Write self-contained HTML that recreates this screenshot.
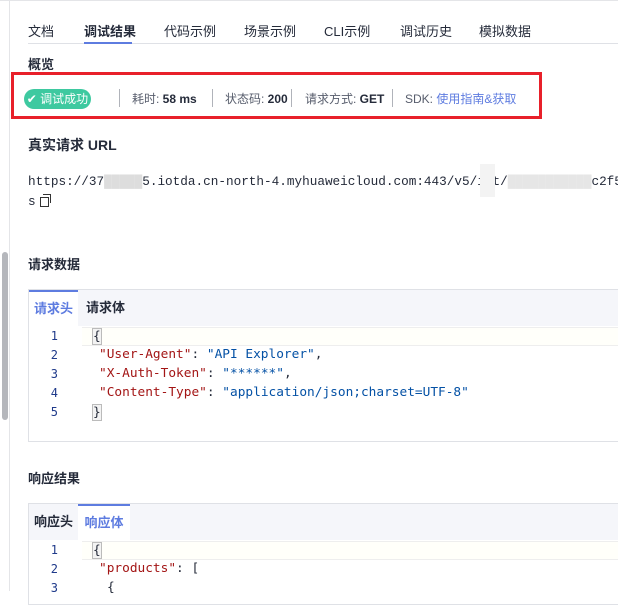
<!DOCTYPE html>
<html><head><meta charset="utf-8"><style>
body{margin:0;width:618px;height:591px;overflow:hidden;background:#fff;font-family:"Liberation Sans","Noto Sans CJK SC",sans-serif;color:#252b3a;position:relative}
.a{position:absolute;white-space:nowrap}
.tab{font-size:13px;top:21px}
.h{font-size:13px;font-weight:bold}
.mono{font-family:"Liberation Mono","DejaVu Sans Mono",monospace;font-size:12.7px}
.box{position:absolute;left:28px;width:600px;border:1px solid #dfe1e6}
.hdr{position:absolute;left:0;top:0;right:0;height:36px;background:#f5f6fa}
.t{position:absolute;top:0;height:36px;line-height:36px;font-size:13px;font-weight:bold;text-align:center}
.act{background:#fff;border-top:2px solid #5e7ce0;color:#5e7ce0;height:34px;line-height:34px}
.ln{position:absolute;left:0;width:29px;text-align:right;font-family:"DejaVu Sans Mono",monospace;font-size:12px;color:#1f3a8a}
.code{position:absolute;left:70px;font-family:"DejaVu Sans Mono",monospace;font-size:12.8px}
.k{color:#a31515}.s{color:#0451a5}
.sep{position:absolute;top:89px;width:1px;height:18px;background:#b0b3ba}
</style></head><body>
<div class="a" style="left:0;top:0;width:618px;height:1px;background:#e4e5e8"></div>
<div class="a" style="left:9px;top:0;width:1px;height:591px;background:#e4e5e8"></div>
<div class="a" style="left:2px;top:252px;width:6px;height:168px;background:#b5b7bc;border-radius:3px"></div>

<div class="a tab" style="left:28px">文档</div>
<div class="a tab" style="left:84px;font-weight:bold">调试结果</div>
<div class="a tab" style="left:164px">代码示例</div>
<div class="a tab" style="left:244px">场景示例</div>
<div class="a tab" style="left:324px">CLI示例</div>
<div class="a tab" style="left:400px">调试历史</div>
<div class="a tab" style="left:479px">模拟数据</div>
<div class="a" style="left:28px;top:43px;width:590px;height:1px;background:#dfe1e6"></div>
<div class="a" style="left:84px;top:42px;width:48px;height:2px;background:#5e7ce0"></div>

<div class="a h" style="left:28px;top:54px">概览</div>
<div class="a" style="left:11px;top:72px;width:525px;height:41px;border:3px solid #e8202a"></div>
<div class="a" style="left:24px;top:89px;width:67px;height:20px;border-radius:10px;background:#3ec9a0;color:#fff;font-size:12px;line-height:20px;text-align:center">✔ 调试成功</div>
<div class="sep" style="left:119px"></div>
<div class="a" style="left:132px;top:90px;font-size:12px;color:#575d6c">耗时: <b style="color:#252b3a">58 ms</b></div>
<div class="sep" style="left:212px"></div>
<div class="a" style="left:225px;top:90px;font-size:12px;color:#575d6c">状态码: <b style="color:#252b3a">200</b></div>
<div class="sep" style="left:291px"></div>
<div class="a" style="left:305px;top:90px;font-size:12px;color:#575d6c">请求方式: <b style="color:#252b3a">GET</b></div>
<div class="sep" style="left:392px"></div>
<div class="a" style="left:405px;top:90px;font-size:12px;color:#575d6c">SDK: <span style="color:#5e7ce0">使用指南&amp;获取</span></div>

<div class="a h" style="left:28px;top:135px;font-size:14px">真实请求 URL</div>
<div class="a mono" style="left:28px;top:174px">https://37<span style="color:#ddd">█████</span>5.iotda.cn-north-4.myhuaweicloud.com:443/v5/iot/<span style="color:#e6e6e6">███████████</span>c2f5-</div>
<div class="a" style="left:480px;top:164px;width:15px;height:33px;background:#f3f3f3"></div>
<div class="a mono" style="left:28px;top:194px">s</div>
<div class="a" style="left:43px;top:194px;width:7px;height:8px;border:1.5px solid #333;border-bottom:none;border-left:none"></div>
<div class="a" style="left:40px;top:197px;width:7px;height:8px;border:1.5px solid #333;background:#fff"></div>

<div class="a h" style="left:28px;top:254px">请求数据</div>
<div class="box" style="top:289px;height:151px">
 <div class="hdr"></div>
 <div class="t act" style="left:0;width:49px">请求头</div>
 <div class="t" style="left:57px">请求体</div>
 <div class="a" style="left:53px;top:37px;right:0;height:17px;border-top:1px solid #eee;border-bottom:1px solid #eee;background:#fffffa"></div>
 <div class="ln" style="top:39px">1</div><div class="ln" style="top:58px">2</div><div class="ln" style="top:77px">3</div><div class="ln" style="top:96px">4</div><div class="ln" style="top:115px">5</div>
 <div class="code" style="left:63px;top:38px;border:1px solid #bbb;background:#f3f3f3">{</div>
 <div class="code" style="left:70px;top:57px"><span class="k">"User-Agent"</span>: <span class="s">"API Explorer"</span>,</div>
 <div class="code" style="left:70px;top:76px"><span class="k">"X-Auth-Token"</span>: <span class="s">"******"</span>,</div>
 <div class="code" style="left:70px;top:95px"><span class="k">"Content-Type"</span>: <span class="s">"application/json;charset=UTF-8"</span></div>
 <div class="code" style="left:63px;top:114px;border:1px solid #bbb;background:#f3f3f3">}</div>
</div>

<div class="a h" style="left:28px;top:468px">响应结果</div>
<div class="box" style="top:503px;height:100px">
 <div class="hdr"></div>
 <div class="t" style="left:0;width:49px">响应头</div>
 <div class="t act" style="left:49px;width:52px">响应体</div>
 <div class="a" style="left:53px;top:37px;right:0;height:17px;border-top:1px solid #eee;border-bottom:1px solid #eee;background:#fffffa"></div>
 <div class="ln" style="top:39px">1</div><div class="ln" style="top:58px">2</div><div class="ln" style="top:77px">3</div>
 <div class="code" style="left:63px;top:38px;border:1px solid #bbb;background:#f3f3f3">{</div>
 <div class="code" style="left:70px;top:57px"><span class="k">"products"</span>: [</div>
 <div class="code" style="left:78px;top:76px">{</div>
</div>
</body></html>
